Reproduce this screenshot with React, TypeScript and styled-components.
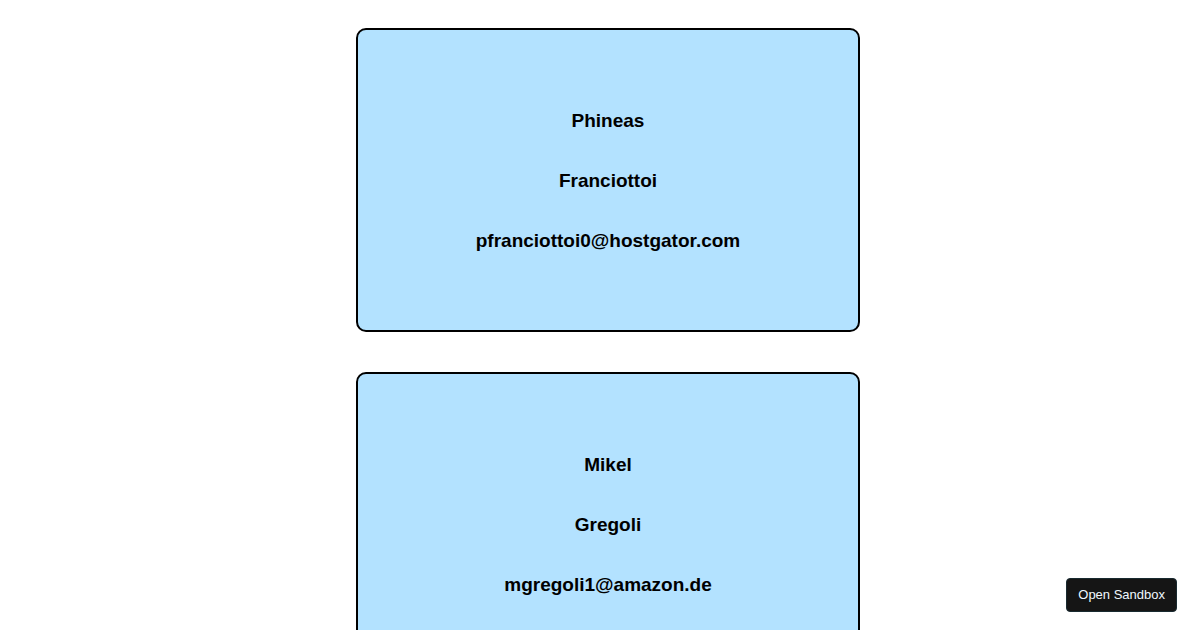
import React from "react";
import styled, { createGlobalStyle } from "styled-components";

const GlobalStyle = createGlobalStyle`
  body {
    margin: 8px;
    background: #ffffff;
    color: #000000;
    font-family: "Liberation Sans", Arial, sans-serif;
    overflow-x: hidden;
  }
  body::-webkit-scrollbar {
    display: none;
  }
`;

const CardList = styled.main`
  display: flex;
  flex-direction: column;
  align-items: center;
  gap: 40px;
  padding: 20px 0 20px 16px;
`;

const Card = styled.article`
  box-sizing: border-box;
  display: flex;
  flex-direction: column;
  justify-content: center;
  align-items: center;
  gap: 38px;
  width: 100%;
  max-width: 504px;
  min-height: 304px;
  padding-top: 2px;
  border: 2px solid #000000;
  border-radius: 10px;
  background: #b3e2ff;
`;

const CardLine = styled.h3`
  margin: 0;
  font-size: 19px;
  line-height: 22px;
  font-weight: 700;
`;

const SandboxButton = styled.button`
  position: fixed;
  right: 23px;
  bottom: 18px;
  height: 34px;
  padding: 0 11px;
  border: 1px solid #192a30;
  border-radius: 4px;
  background: #151515;
  color: #f0f8ff;
  font-family: inherit;
  font-size: 13px;
  line-height: 16px;
  cursor: pointer;
`;

const people = [
  { first: "Phineas", last: "Franciottoi", email: "pfranciottoi0@hostgator.com" },
  { first: "Mikel", last: "Gregoli", email: "mgregoli1@amazon.de" },
];

export default function App() {
  return (
    <>
      <GlobalStyle />
      <CardList>
        {people.map((person) => (
          <Card key={person.email}>
            <CardLine>{person.first}</CardLine>
            <CardLine>{person.last}</CardLine>
            <CardLine>{person.email}</CardLine>
          </Card>
        ))}
      </CardList>
      <SandboxButton type="button">Open Sandbox</SandboxButton>
    </>
  );
}
